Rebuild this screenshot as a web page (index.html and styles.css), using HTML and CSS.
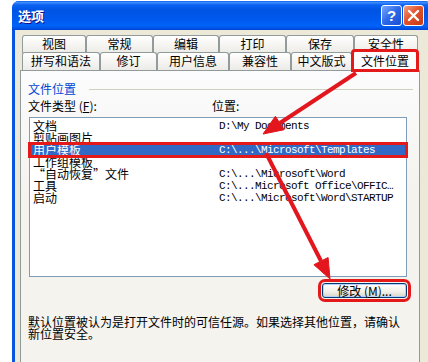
FILE: index.html
```html
<!DOCTYPE html>
<html lang="zh-CN">
<head>
  <meta charset="UTF-8">
  <title>选项</title>
  <link rel="stylesheet" href="styles.css">
</head>
<body>
  <div class="window">
    <div class="titlebar">
      <span class="title">选项</span>
      <div class="caption-btns">
        <span class="cbtn help">?</span>
        <span class="cbtn close">
          <svg width="13" height="13" viewBox="0 0 13 13"><path d="M2 2 L11 11 M11 2 L2 11" stroke="#fff" stroke-width="2.4" stroke-linecap="round"/></svg>
        </span>
      </div>
    </div>

    <div class="dialog">
      <!-- tab strip, two rows -->
      <div class="tabs">
        <div class="tab-row back">
          <div class="tab">视图</div>
          <div class="tab">常规</div>
          <div class="tab">编辑</div>
          <div class="tab">打印</div>
          <div class="tab">保存</div>
          <div class="tab">安全性</div>
        </div>
        <div class="tab-row front">
          <div class="tab">拼写和语法</div>
          <div class="tab">修订</div>
          <div class="tab">用户信息</div>
          <div class="tab">兼容性</div>
          <div class="tab">中文版式</div>
          <div class="tab active">文件位置</div>
        </div>
      </div>

      <div class="panel">
        <div class="group-title"><span>文件位置</span><i class="rule"></i></div>
        <div class="list-head"><span>文件类型 (<u>F</u>):</span><span>位置:</span></div>

        <div class="list">
          <div class="row"><span>文档</span><span class="path">D:\My Documents</span></div>
          <div class="row"><span>剪贴画图片</span><span class="path"></span></div>
          <div class="row sel"><span>用户模板</span><span class="path">C:\...\Microsoft\Templates</span></div>
          <div class="row"><span>工作组模板</span><span class="path"></span></div>
          <div class="row"><span>“自动恢复”文件</span><span class="path">C:\...\Microsoft\Word</span></div>
          <div class="row"><span>工具</span><span class="path">C:\...Microsoft Office\OFFIC…</span></div>
          <div class="row"><span>启动</span><span class="path">C:\...\Microsoft\Word\STARTUP</span></div>
        </div>

        <div class="actions">
          <button class="btn">修改 (<u>M</u>)...</button>
        </div>

        <p class="note">默认位置被认为是打开文件时的可信任源。如果选择其他位置，请确认新位置安全。</p>
      </div>
    </div>
  </div>

  <!-- red annotation arrows -->
  <svg class="arrows" width="428" height="362" viewBox="0 0 428 362">
    <g fill="#e3161e" stroke="#e3161e">
      <line x1="356" y1="73" x2="280" y2="123" stroke-width="4"/>
      <polygon points="263,134 284.2,129.7 275.4,116.3" stroke-width="1"/>
      <line x1="266" y1="153" x2="321" y2="261" stroke-width="4"/>
      <polygon points="330,279 313.9,264.7 328.1,257.5" stroke-width="1"/>
    </g>
  </svg>
</body>
</html>
```

FILE: styles.css
```css
:root {
  --xp-face: #ece9d8;
  --tab-border: #919b9c;
  --mark-red: #e41a1a;
  --select-blue: #316ac5;
}

html, body {
  margin: 0;
  width: 428px;
  height: 362px;
  overflow: hidden;
}

body {
  background: #fff;
  font-family: "Noto Sans CJK SC", sans-serif;
  font-size: 12px;
  color: #000;
}

.window {
  margin: 1px 0 0 12px;
  width: 420px;
  height: 361px;
  background: #0a55e0;
  border-radius: 7px 7px 0 0;
  display: flex;
  flex-direction: column;
}

.titlebar {
  height: 29px;
  flex: none;
  display: flex;
  align-items: center;
  padding: 0 8px 0 6px;
  border-radius: 7px 7px 0 0;
  background: linear-gradient(to bottom, #0a5ee8 0%, #3d8bff 5%, #0a61f0 14%, #0054e3 32%, #0058ee 60%, #0062f8 85%, #0055e5 94%, #003dd7 100%);
}

.title {
  color: #fff;
  font-weight: bold;
  font-size: 13px;
  line-height: 13px;
  text-shadow: 1px 1px #0f1089;
}

.caption-btns {
  margin-left: auto;
  display: flex;
  gap: 1px;
}

.cbtn {
  width: 19px;
  height: 19px;
  border: 1px solid #fff;
  border-radius: 3px;
  display: flex;
  align-items: center;
  justify-content: center;
  color: #fff;
}

.help {
  background: linear-gradient(135deg, #7aa8fd 0%, #2c67e8 50%, #1a4dd3 100%);
  font-family: "Liberation Sans", sans-serif;
  font-weight: bold;
  font-size: 15px;
}

.close {
  background: linear-gradient(135deg, #f3a184 0%, #e2532d 45%, #c63a12 100%);
}

.dialog {
  flex: 1;
  margin-left: 3px;
  padding: 5px 0 0 5px;
  background: var(--xp-face);
}

/* tabs */
.tabs {
  margin-left: 2px;
  width: 396px;
}

.tab-row {
  display: grid;
  grid-template-rows: 18px;
}

.tab-row.back {
  grid-template-columns: 64px 67px 66px 67px 68px 64px;
}

.tab-row.front {
  margin-top: -1px;
  grid-template-columns: 78px 57px 72px 62px 61px 66px;
}

.tab {
  height: 18px;
  box-sizing: border-box;
  border: 1px solid var(--tab-border);
  border-bottom: none;
  border-radius: 3px 3px 0 0;
  background: linear-gradient(#fff, #ecebe6);
  text-align: center;
  line-height: 16px;
  white-space: nowrap;
}

.tab.active {
  height: 21px;
  margin-top: -2px;
  z-index: 1;
  background: #fcfcfe;
  line-height: 20px;
  outline: 3px solid var(--mark-red);
  outline-offset: -2px;
}

/* page body */
.panel {
  width: 400px;
  height: 300px;
  box-sizing: border-box;
  border: 1px solid var(--tab-border);
  padding: 12px 6px 0 7px;
  background: linear-gradient(#fcfcfe, #f4f3ee 40%);
}

.group-title {
  display: flex;
  align-items: center;
  gap: 13px;
  color: #0046d5;
  line-height: 12px;
}

.rule {
  flex: 1;
  border-top: 1px solid #d0d0bf;
}

.list-head {
  margin-top: 5px;
  display: grid;
  grid-template-columns: 184px auto;
  line-height: 12px;
}

.list {
  margin: 5px 0 0 1px;
  width: 378px;
  height: 160px;
  box-sizing: border-box;
  border: 1px solid #7f9db9;
  background: #fff;
  padding-top: 2px;
}

.row {
  display: grid;
  grid-template-columns: 186px auto;
  height: 12px;
  line-height: 12px;
  padding-left: 3px;
  white-space: nowrap;
}

.row.sel {
  background: var(--select-blue);
  color: #fff;
  outline: 3px solid var(--mark-red);
  outline-offset: -1px;
}

.path {
  font-family: "Liberation Mono", monospace;
  font-size: 11px;
  letter-spacing: -0.6px;
}

.actions {
  width: 379px;
  margin-top: 6px;
  display: flex;
  justify-content: flex-end;
}

.btn {
  width: 85px;
  height: 15px;
  padding: 0;
  border: 1px solid #003c74;
  border-radius: 3px;
  background: linear-gradient(#fff, #f0efe8 60%, #d8d5c8);
  box-shadow: inset 0 0 0 1px #b7cffa;
  font-family: inherit;
  font-size: 12px;
  line-height: 12px;
  color: #000;
  outline: 3px solid var(--mark-red);
  outline-offset: 1px;
}

.note {
  margin: 18px 0 0;
  width: 380px;
  line-height: 12px;
}

.arrows {
  position: absolute;
  left: 0;
  top: 0;
  pointer-events: none;
}
```
